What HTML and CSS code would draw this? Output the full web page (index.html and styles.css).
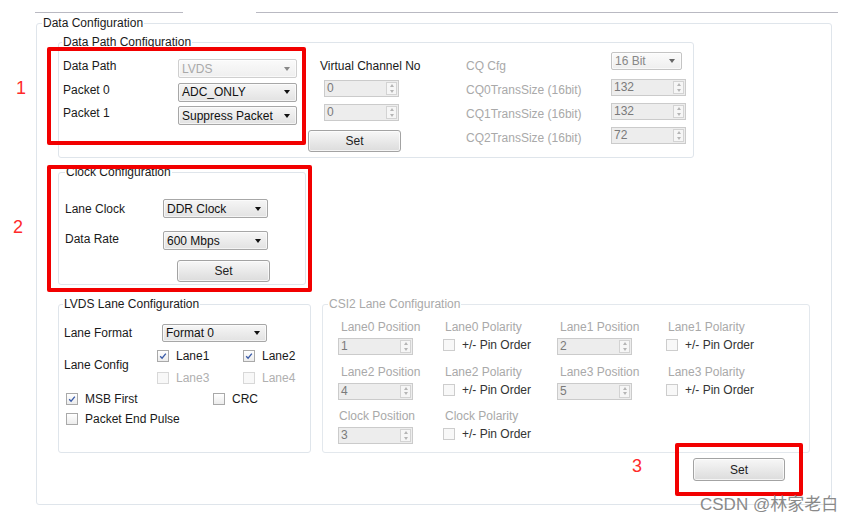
FILE: index.html
```html
<!DOCTYPE html>
<html>
<head>
<meta charset="utf-8">
<title>Data Configuration</title>
<link rel="stylesheet" href="styles.css">
</head>
<body>
<div class="page">
  <div class="tabs"><div class="tab-line t1"></div><div class="tab-line t2"></div></div>

  <fieldset class="grp outer">
    <legend class="lg-outer">Data Configuration</legend>

    <fieldset class="grp dp">
      <legend class="lg-dp">Data Path Configuration</legend>
      <div class="dp-body">
        <div class="dp-a">
          <div class="lbl">Data Path</div><div class="sel dis">LVDS</div>
          <div class="lbl">Packet 0</div><div class="sel">ADC_ONLY</div>
          <div class="lbl">Packet 1</div><div class="sel">Suppress Packet</div>
        </div>
        <div class="dp-b">
          <div class="lbl vcn">Virtual Channel No</div>
          <div class="spin vc1"><span class="val">0</span><span class="btns"><i class="up"></i><i class="dn"></i></span></div>
          <div class="spin vc2"><span class="val">0</span><span class="btns"><i class="up"></i><i class="dn"></i></span></div>
          <div class="btn dp-set">Set</div>
        </div>
        <div class="dp-c">
          <div class="cq-row r1"><div class="lbl gray cq-l">CQ Cfg</div><div class="sel cq-sel">16 Bit</div></div>
          <div class="cq-row r2"><div class="lbl gray cq-l">CQ0TransSize (16bit)</div><div class="spin cq-spin"><span class="val">132</span><span class="btns"><i class="up"></i><i class="dn"></i></span></div></div>
          <div class="cq-row"><div class="lbl gray cq-l">CQ1TransSize (16bit)</div><div class="spin cq-spin"><span class="val">132</span><span class="btns"><i class="up"></i><i class="dn"></i></span></div></div>
          <div class="cq-row"><div class="lbl gray cq-l">CQ2TransSize (16bit)</div><div class="spin cq-spin"><span class="val">72</span><span class="btns"><i class="up"></i><i class="dn"></i></span></div></div>
        </div>
      </div>
    </fieldset>

    <fieldset class="grp clk">
      <legend class="lg-clk">Clock Configuration</legend>
      <div class="clk-body">
        <div class="clk-grid">
          <div class="lbl cl1">Lane Clock</div><div class="sel">DDR Clock</div>
          <div class="lbl cl2">Data Rate</div><div class="sel">600 Mbps</div>
        </div>
        <div class="btn clk-set">Set</div>
      </div>
    </fieldset>

    <div class="lane-row">
      <fieldset class="grp lvds">
        <legend class="lg-lvds">LVDS Lane Configuration</legend>
        <div class="lvds-body">
          <div class="lf-row"><div class="lbl lf-l">Lane Format</div><div class="sel lf-sel">Format 0</div></div>
          <div class="lc-row">
            <div class="lbl lc-l">Lane Config</div>
            <div class="lc-grid">
              <label class="chk"><span class="cb"><svg viewBox="0 0 12 12"><path d="M2.6 6.2 L4.9 8.6 L9.4 3.2"/></svg></span>Lane1</label>
              <label class="chk"><span class="cb"><svg viewBox="0 0 12 12"><path d="M2.6 6.2 L4.9 8.6 L9.4 3.2"/></svg></span>Lane2</label>
              <label class="chk off"><span class="cb"></span>Lane3</label>
              <label class="chk off"><span class="cb"></span>Lane4</label>
            </div>
          </div>
          <div class="opt-row r-msb">
            <label class="chk msb"><span class="cb"><svg viewBox="0 0 12 12"><path d="M2.6 6.2 L4.9 8.6 L9.4 3.2"/></svg></span>MSB First</label>
            <label class="chk"><span class="cb"></span>CRC</label>
          </div>
          <div class="opt-row r-pep">
            <label class="chk"><span class="cb"></span>Packet End Pulse</label>
          </div>
        </div>
      </fieldset>

      <fieldset class="grp csi">
        <legend class="lg-csi">CSI2 Lane Configuration</legend>
        <div class="csi-grid">
          <div class="cell"><div class="lbl gray pos-l">Lane0 Position</div><div class="spin csp"><span class="val">1</span><span class="btns"><i class="up"></i><i class="dn"></i></span></div></div>
          <div class="cell"><div class="lbl gray pol-l">Lane0 Polarity</div><label class="pin"><span class="cb"></span>+/- Pin Order</label></div>
          <div class="cell"><div class="lbl gray pos-l">Lane1 Position</div><div class="spin csp"><span class="val">2</span><span class="btns"><i class="up"></i><i class="dn"></i></span></div></div>
          <div class="cell"><div class="lbl gray pol-l">Lane1 Polarity</div><label class="pin"><span class="cb"></span>+/- Pin Order</label></div>

          <div class="cell"><div class="lbl gray pos-l">Lane2 Position</div><div class="spin csp"><span class="val">4</span><span class="btns"><i class="up"></i><i class="dn"></i></span></div></div>
          <div class="cell"><div class="lbl gray pol-l">Lane2 Polarity</div><label class="pin"><span class="cb"></span>+/- Pin Order</label></div>
          <div class="cell"><div class="lbl gray pos-l">Lane3 Position</div><div class="spin csp"><span class="val">5</span><span class="btns"><i class="up"></i><i class="dn"></i></span></div></div>
          <div class="cell"><div class="lbl gray pol-l">Lane3 Polarity</div><label class="pin"><span class="cb"></span>+/- Pin Order</label></div>

          <div class="cell"><div class="lbl gray pos-l clkpos">Clock Position</div><div class="spin csp"><span class="val">3</span><span class="btns"><i class="up"></i><i class="dn"></i></span></div></div>
          <div class="cell"><div class="lbl gray pol-l">Clock Polarity</div><label class="pin"><span class="cb"></span>+/- Pin Order</label></div>
        </div>
      </fieldset>
    </div>

    <div class="footer"><div class="btn main-set">Set</div></div>
  </fieldset>

  <div class="mark box1"></div>
  <div class="mark box2"></div>
  <div class="mark box3"></div>
  <div class="num n1">1</div>
  <div class="num n2">2</div>
  <div class="num n3">3</div>
  <div class="watermark">CSDN @林家老白</div>
</div>
</body>
</html>
```

FILE: styles.css
```css
* { box-sizing: border-box; }
html, body { margin: 0; padding: 0; background: #fff; }
body {
  font-family: "Liberation Sans", Arial, "Noto Sans CJK SC", sans-serif;
  font-size: 12px;
  color: #1a1a1a;
}
.page { position: relative; width: 850px; height: 522px; overflow: hidden; }

/* tab strip lines */
.tabs { display: flex; padding-top: 12px; height: 13px; }
.tab-line { height: 1px; background: #b9b9c2; }
.t1 { margin-left: 35px; width: 148px; }
.t2 { margin-left: 73px; width: 582px; }

/* group boxes */
.grp {
  margin: 0;
  padding: 0;
  min-width: 0;
  border: 1px solid #dfe5eb;
  border-radius: 3px;
}
.grp > legend {
  padding: 0 1px;
  line-height: 14px;
  font-size: 12px;
  color: #1a1a1a;
}
.outer { margin: 3px 0 0 36px; width: 796px; height: 489px; }
.lg-outer { margin-left: 5px; }

.lbl { line-height: 14px; white-space: nowrap; }
.gray { color: #a9a9a9; }

/* combo box */
.sel {
  display: flex;
  align-items: center;
  justify-content: space-between;
  height: 19px;
  padding: 0 6px 0 3px;
  border: 1px solid #a7a7a7;
  border-radius: 2px;
  background: linear-gradient(#f6f6f6, #e2e2e2);
  color: #111;
  white-space: nowrap;
  box-shadow: inset 0 0 0 1px rgba(255,255,255,0.6);
}
.sel::after {
  content: "";
  flex: none;
  margin-left: 4px;
  border-left: 3.5px solid transparent;
  border-right: 3.5px solid transparent;
  border-top: 4px solid #111;
}
.sel.dis { color: #a9a9a9; border-color: #cfcfcf; background: linear-gradient(#fafafa, #efefef); }
.sel.dis::after { border-top-color: #888; }

/* spin box */
.spin {
  display: flex;
  height: 17px;
  border: 1px solid #cbcbcb;
  background: #ededed;
  padding: 1px 1px 1px 2px;
}
.spin .val { flex: 1; line-height: 13px; color: #7a7a7a; }
.spin .btns {
  width: 11px;
  display: flex;
  flex-direction: column;
  justify-content: space-around;
  align-items: center;
  border: 1px solid #d3d3d3;
  background: #f6f6f6;
}
.spin .up, .spin .dn { display: block; width: 0; height: 0; border-left: 2.5px solid transparent; border-right: 2.5px solid transparent; }
.spin .up { border-bottom: 3px solid #b5b5b5; }
.spin .dn { border-top: 3px solid #b5b5b5; }

/* push button */
.btn {
  display: flex;
  align-items: center;
  justify-content: center;
  border: 1px solid #a3a3a3;
  border-radius: 3px;
  background: linear-gradient(#f7f7f7, #dcdcdc);
  color: #222;
  box-shadow: inset 0 0 0 1px rgba(255,255,255,0.7);
}

/* checkbox */
.cb {
  flex: none;
  width: 12px;
  height: 12px;
  border: 1px solid #a9a9a9;
  background: linear-gradient(#ffffff, #ececec);
  display: flex;
}
.cb svg { width: 10px; height: 10px; fill: none; stroke: #3a5ba8; stroke-width: 1.6; }
.chk { display: flex; align-items: center; gap: 7px; line-height: 12px; color: #1a1a1a; }
.chk.off { color: #b0b0b0; }
.chk.off .cb { border-color: #d8d8d8; background: #f8f8f8; }

/* Data path group */
.dp { margin: 5px 0 0 21px; width: 636px; height: 123px; }
.lg-dp { margin-left: 3px; }
.dp-body { display: flex; padding: 10px 0 0 4px; }
.dp-a {
  display: grid;
  grid-template-columns: 115px 119px;
  grid-auto-rows: 19px;
  row-gap: 4.5px;
  align-items: start;
}
.dp-b { margin-left: 11px; width: 93px; display: flex; flex-direction: column; }
.vcn { padding-left: 12px; }
.vc1 { margin: 7px 0 0 16px; width: 75px; }
.vc2 { margin: 7px 0 0 16px; width: 75px; }
.dp-set { margin-top: 9px; width: 93px; height: 22px; }
.dp-c { margin-left: 65px; margin-top: -7px; display: flex; flex-direction: column; }
.cq-row { display: flex; height: 17px; margin-top: 7px; }
.cq-row.r1 { height: 18px; margin-top: 0; }
.cq-row.r2 { margin-top: 9px; }
.cq-l { width: 145px; margin-top: 4px; }
.r1 .cq-l { margin-top: 7px; }
.cq-sel { width: 71px; height: 18px; border-color: #c4c4c4; color: #888; background: linear-gradient(#fbfbfb, #eeeeee); }
.cq-sel::after { border-top-color: #666; }
.cq-spin { width: 75px; }

/* Clock group */
.clk { margin: 7px 0 0 21px; width: 248px; height: 120px; }
.lg-clk { margin-left: 6px; }
.clk-body { padding: 20px 0 0 6px; }
.clk-grid {
  display: grid;
  grid-template-columns: 98px 105px;
  grid-auto-rows: 19px;
  row-gap: 13px;
}
.cl1 { margin-top: 3px; }
.cl2 { margin-top: 1px; }
.clk-set { margin: 10px 0 0 112px; width: 93px; height: 22px; }

/* lane groups */
.lane-row { display: flex; margin: 12px 0 0 21px; }
.lvds { width: 253px; height: 156px; }
.lg-lvds { margin-left: 4px; }
.lvds-body { padding: 13px 0 0 5px; }
.lf-row { display: flex; height: 18px; }
.lf-l { width: 98px; margin-top: 2px; }
.lf-sel { width: 105px; height: 18px; }
.lc-row { display: flex; margin-top: 8px; }
.lc-l { width: 93px; margin-top: 8px; }
.lc-grid { display: grid; grid-template-columns: 86px auto; grid-auto-rows: 12px; row-gap: 10px; }
.opt-row { display: flex; height: 12px; padding-left: 2px; }
.r-msb { margin-top: 9px; }
.r-pep { margin-top: 8px; }
.msb { width: 147px; }

.csi { margin-left: 11px; width: 488px; height: 156px; border-color: #e3e8ed; }
.lg-csi { margin-left: 5px; color: #a9a9a9 !important; }
.csi-grid {
  display: grid;
  grid-template-columns: 105px 114px 109px auto;
  row-gap: 9.5px;
  padding: 9px 0 0 15px;
}
.cell { display: flex; flex-direction: column; }
.pos-l { margin-left: 3px; }
.clkpos { margin-left: 1px; }
.pol-l { margin-left: 2px; }
.csp { margin-top: 4px; width: 75px; }
.pin { display: flex; align-items: center; gap: 7px; margin-top: 5px; line-height: 12px; color: #333; }
.pin .cb { border-color: #cdcdcd; background: #f8f8f8; }

.footer { display: flex; justify-content: flex-end; padding-right: 46px; margin-top: 5px; }
.main-set { width: 92px; height: 23px; }

/* red annotations overlaying the screenshot */
.mark { position: absolute; border: 4px solid #f20000; border-radius: 2px; }
.box1 { left: 47px; top: 47px; width: 259px; height: 98px; }
.box2 { left: 47px; top: 165px; width: 265px; height: 127px; }
.box3 { left: 675px; top: 443px; width: 128px; height: 53px; }
.num { position: absolute; font-size: 18px; line-height: 18px; color: #ff2a2a; }
.n1 { left: 16px; top: 79px; }
.n2 { left: 13px; top: 218px; }
.n3 { left: 632px; top: 457px; }
.watermark {
  position: absolute;
  left: 700px;
  top: 495px;
  font-size: 17px;
  line-height: 19px;
  color: #8a8a8a;
  white-space: nowrap;
}
```
